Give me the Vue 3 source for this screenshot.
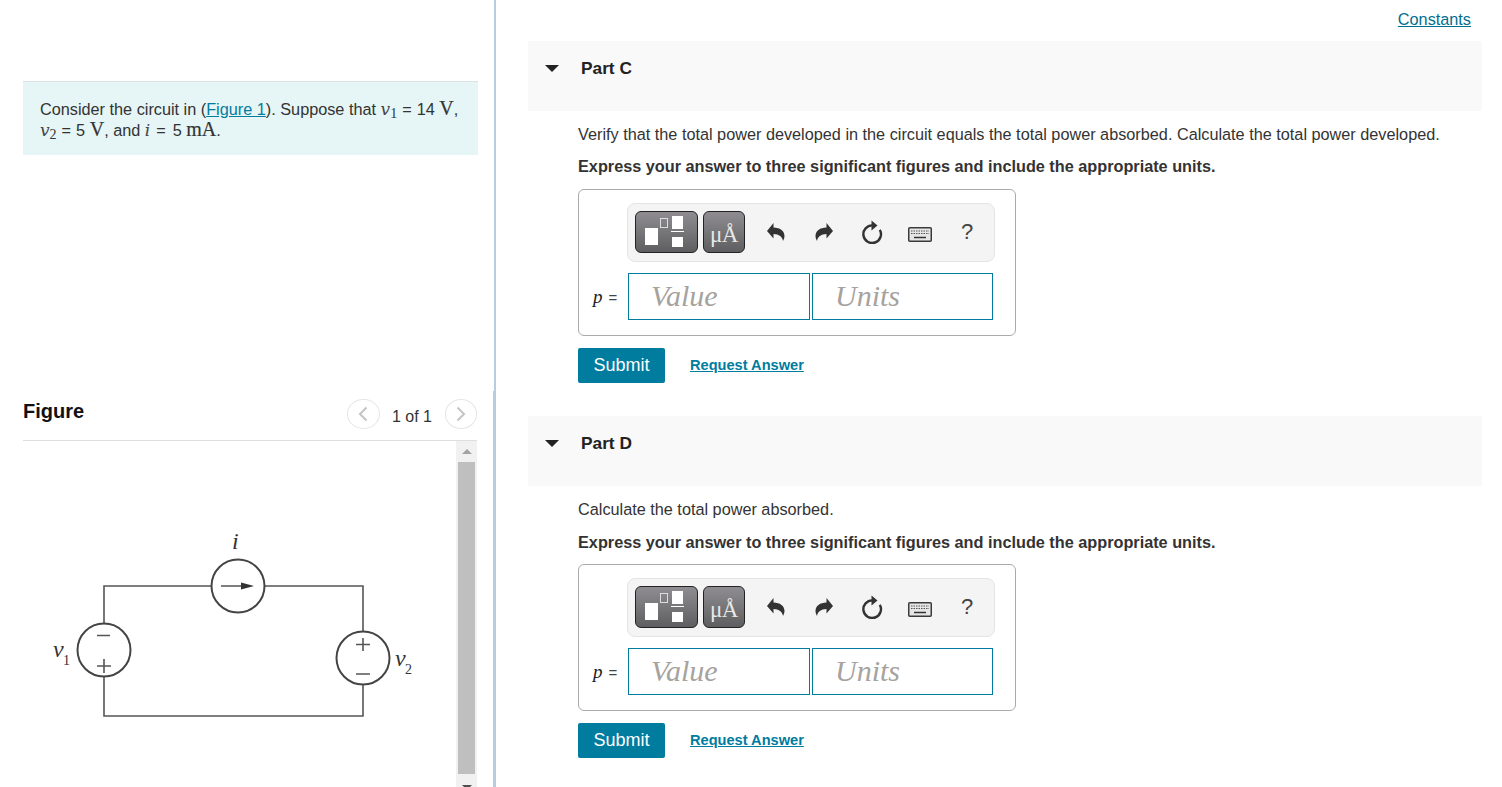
<template>
  <div class="page">
    <aside class="left">
      <div class="statement">
        Consider the circuit in (<a href="#" class="fig-link">Figure 1</a>). Suppose that
        <i class="mv">v</i><span class="ms">1</span><span class="eq">=</span>14 <span class="mu">V</span>,<br />
        <i class="mv">v</i><span class="ms">2</span><span class="eq">=</span>5 <span class="mu">V</span>, and
        <i class="mi">i</i><span class="eq eq-wide">=</span>5 <span class="mu">mA</span>.
      </div>

      <div class="fig-head">
        <span class="fig-title">Figure</span>
        <div class="fig-nav">
          <span class="round-btn">
            <svg width="10" height="16" viewBox="0 0 10 16"><path d="M8.500 1.500 2 8l6.500 6.500" /></svg>
          </span>
          <span class="fig-count">1 of 1</span>
          <span class="round-btn">
            <svg width="10" height="16" viewBox="0 0 10 16"><path d="M1.500 1.500 8 8l-6.500 6.500" /></svg>
          </span>
        </div>
      </div>

      <div class="fig-body">
        <svg class="circuit" width="433" height="346" viewBox="23 441 433 346">
          <g fill="none" stroke="#555" stroke-width="1.600">
            <path d="M211 586H104V623M265 586H363V631M104 677V716H363V685" />
          </g>
          <g fill="#fff" stroke="#444" stroke-width="2">
            <circle cx="238" cy="586" r="26.500" />
            <circle cx="104" cy="650" r="26.500" />
            <circle cx="363" cy="658" r="26.500" />
          </g>
          <path d="M221 586H245" stroke="#555" stroke-width="1.500" />
          <path d="M241 582.500 254 586l-13 3.500z" fill="#333" />
          <path d="M97 635.500H110M97 666H111M104 659V673" stroke="#555" stroke-width="1.600" fill="none" />
          <path d="M356 644.500H370M363 638V651M356 674H370" stroke="#555" stroke-width="1.600" fill="none" />
          <text x="232" y="549" class="cv">i</text>
          <text x="53" y="657" class="cv">v</text>
          <text x="63" y="665" class="cs">1</text>
          <text x="395" y="666" class="cv">v</text>
          <text x="405" y="674" class="cs">2</text>
        </svg>
        <div class="scrollbar">
          <span class="arrow-up"></span>
          <span class="thumb"></span>
          <span class="arrow-down"></span>
        </div>
      </div>
    </aside>

    <main class="right">
      <div class="top-link"><a href="#">Constants</a></div>

      <section v-for="part in parts" :key="part.name" class="part">
        <header class="part-head">
          <span class="caret"></span>
          <span class="part-name">{{ part.name }}</span>
        </header>
        <p class="prompt">{{ part.prompt }}</p>
        <p class="instr">Express your answer to three significant figures and include the appropriate units.</p>

        <div class="answer">
          <div class="toolbar">
            <button class="tool tool-wide">
              <svg width="61" height="40" viewBox="0 0 61 40">
                <rect x="9" y="16" width="13" height="17" fill="#fff" />
                <rect x="24.500" y="6.500" width="7" height="9" fill="none" stroke="#ddd" />
                <rect x="36" y="4" width="11" height="13" fill="#fff" />
                <rect x="35" y="19" width="13" height="1" fill="#fff" />
                <rect x="36" y="25" width="11" height="10" fill="#fff" />
              </svg>
            </button>
            <button class="tool tool-unit">μÅ</button>
            <span class="slot">
              <svg width="18" height="18" viewBox="0 0 18 18">
                <path d="M0 8 6.500 0V4.500C13 4.500 17.500 8 17.500 13 17.500 15 16.500 17 16 18 15.500 14 12 11 6.500 11V15.500z" />
              </svg>
            </span>
            <span class="slot">
              <svg width="18" height="18" viewBox="0 0 18 18">
                <path transform="translate(18 0) scale(-1 1)" d="M0 8 6.500 0V4.500C13 4.500 17.500 8 17.500 13 17.500 15 16.500 17 16 18 15.500 14 12 11 6.500 11V15.500z" />
              </svg>
            </span>
            <span class="slot">
              <svg width="22" height="24" viewBox="0 0 22 24">
                <path d="M11.500 5.400A8.800 8.800 0 1 0 18.800 9.800" fill="none" stroke="#333" stroke-width="2.400" />
                <path d="M10.500 0.500 16.500 5.400 10.500 10.500z" />
              </svg>
            </span>
            <span class="slot">
              <svg class="kbd" width="24" height="15" viewBox="0 0 24 15">
                <rect x="0.750" y="0.750" width="22.500" height="13.500" rx="1" fill="#e6e6e6" stroke="#3a3a3a" stroke-width="1.500" />
                <path d="M3 4H21M3 6.500H21" stroke="#555" stroke-dasharray="1.500 1" fill="none" />
                <path d="M6 10.500H18" stroke="#333" fill="none" stroke-width="1.500" />
              </svg>
            </span>
            <span class="slot help">?</span>
          </div>
          <div class="entry">
            <span class="entry-label"><i class="pv">p</i>=</span>
            <input class="field field-value" placeholder="Value" />
            <input class="field field-units" placeholder="Units" />
          </div>
        </div>

        <div class="actions">
          <button class="submit">Submit</button>
          <a href="#" class="request">Request Answer</a>
        </div>
      </section>
    </main>
  </div>
</template>

<script setup>
const parts = [
  {
    name: 'Part C',
    prompt: 'Verify that the total power developed in the circuit equals the total power absorbed. Calculate the total power developed.'
  },
  {
    name: 'Part D',
    prompt: 'Calculate the total power absorbed.'
  }
]
</script>

<style scoped>
.page {
  display: flex;
  height: 787px;
  overflow: hidden;
  font-family: "Liberation Sans", Arial, sans-serif;
  font-size: 16.250px;
  line-height: 21px;
  color: #333;
}

.left {
  width: 494px;
  box-sizing: border-box;
  flex: none;
  padding: 81px 16px 0 23px;
  display: flex;
  flex-direction: column;
  position: relative;
}

/* divider is a pixel wider from the figure panel down */
.left::after {
  content: "";
  position: absolute;
  right: 0;
  top: 391px;
  bottom: 0;
  width: 1px;
  background: #b9cde0;
}

.statement {
  height: 74px;
  box-sizing: border-box;
  padding: 17px 0 0 17px;
  background: #e6f5f6;
  border-top: 1px solid #dde3e5;
  white-space: nowrap;
}

.fig-link {
  color: #007c9f;
}

.mv {
  font-family: "DejaVu Serif", serif;
  font-size: 17px;
  line-height: 0;
  color: #444;
}

.mi {
  font-family: "DejaVu Serif", serif;
  font-size: 17px;
  line-height: 0;
  color: #444;
}

.ms {
  font-family: "Liberation Serif", serif;
  font-size: 14px;
  line-height: 0;
  vertical-align: -3px;
}

.eq {
  margin: 0 5px 0 5px;
}

.eq-wide {
  margin: 0 7px 0 6px;
}

.mu {
  font-family: "Liberation Serif", serif;
  font-size: 20px;
  line-height: 0;
  -webkit-text-stroke: 0.2px #333;
}

.fig-head {
  margin-top: 244px;
  margin-right: 1px;
  height: 41px;
  display: flex;
  justify-content: space-between;
  border-bottom: 1px solid #dcdfe0;
}

.fig-title {
  font-size: 20px;
  font-weight: bold;
  color: #111;
  line-height: 24px;
}

.fig-nav {
  display: flex;
  align-items: flex-start;
}

.round-btn {
  width: 32.500px;
  height: 30px;
  box-sizing: border-box;
  border: 1px solid #e6e6e6;
  border-radius: 50%;
  display: flex;
  align-items: center;
  justify-content: center;
}

.round-btn svg {
  fill: none;
  stroke: #c4c4c4;
  stroke-width: 2;
}

.fig-count {
  width: 65px;
  text-align: center;
  line-height: 36px;
  font-size: 16px;
}

.fig-body {
  flex: 1;
  display: flex;
  min-height: 0;
  justify-content: space-between;
}

.circuit {
  flex: none;
}

.cv {
  font-family: "Liberation Serif", serif;
  font-style: italic;
  font-size: 24px;
  fill: #333;
}

.cs {
  font-family: "Liberation Serif", serif;
  font-size: 14px;
  fill: #333;
}

.scrollbar {
  width: 21px;
  margin-right: 1px;
  background: #f1f1f1;
  display: flex;
  flex-direction: column;
  align-items: center;
  padding-top: 8px;
  box-sizing: border-box;
}

.arrow-up {
  width: 0;
  height: 0;
  border: 5px solid transparent;
  border-top: 0;
  border-bottom: 5px solid #a3a3a3;
}

.thumb {
  width: 17px;
  height: 312px;
  margin: 8px 0 11px;
  background: #bfbfbf;
  flex: none;
}

.arrow-down {
  width: 0;
  height: 0;
  border: 5px solid transparent;
  border-bottom: 0;
  border-top: 5px solid #505050;
  flex: none;
}

.right {
  flex: 1;
  border-left: 2px solid #b9cde0;
  padding: 9px 20px 0 32px;
  min-width: 0;
}

.top-link {
  height: 32px;
  padding-right: 11px;
  text-align: right;
}

.top-link a {
  color: #006f8f;
}

.part {
  margin-bottom: 33px;
}

.part-head {
  height: 70px;
  background: #f9f9f9;
  display: flex;
  align-items: flex-start;
  padding: 16px 0 0 17px;
  box-sizing: border-box;
}

.caret {
  width: 0;
  height: 0;
  margin-top: 8px;
  border-left: 7px solid transparent;
  border-right: 7px solid transparent;
  border-top: 7px solid #222;
}

.part-name {
  margin-left: 22px;
  font-size: 17.300px;
  line-height: 22px;
  font-weight: bold;
  color: #222;
}

.prompt {
  margin: 13px 0 11px 50px;
}

.instr {
  margin: 0 0 12px 50px;
  font-weight: bold;
}

.part + .part .prompt {
  margin-bottom: 12px;
}

.part + .part .instr {
  margin-bottom: 11px;
}

.answer {
  margin-left: 50px;
  width: 438px;
  height: 147px;
  box-sizing: border-box;
  border: 1px solid #aaa;
  border-radius: 6px;
  padding: 13px 0 0 48px;
}

.toolbar {
  width: 368px;
  height: 59px;
  box-sizing: border-box;
  background: #f4f4f4;
  border: 1px solid #e4e4e4;
  border-radius: 8px;
  padding: 7px 0 0 7px;
  display: flex;
  align-items: flex-start;
}

.tool {
  height: 42px;
  box-sizing: border-box;
  padding: 0;
  border: 1px solid #222;
  border-radius: 6px;
  background: linear-gradient(#8f8d91, #5e5e60);
  display: flex;
  align-items: center;
  justify-content: center;
}

.tool-wide {
  width: 63px;
}

.tool-unit {
  width: 42px;
  margin-left: 5px;
  padding-top: 5px;
  color: #e8e8e8;
  font-family: "Liberation Serif", serif;
  font-size: 23px;
  letter-spacing: -0.500px;
}

.slot {
  width: 48px;
  height: 42px;
  display: flex;
  align-items: center;
  justify-content: center;
}

.tool-unit + .slot {
  margin-left: 7px;
}

.slot svg {
  fill: #333;
}

.kbd {
  margin-top: 5px;
}

.help {
  font-size: 22px;
  color: #444;
  padding: 0 2px 2px 0;
  box-sizing: border-box;
}

.entry {
  display: flex;
  align-items: center;
  margin-top: 11px;
  margin-left: -48px;
}

.entry-label {
  width: 49px;
  box-sizing: border-box;
  padding-left: 14px;
  white-space: nowrap;
  font-size: 15px;
  color: #444;
}

.pv {
  font-family: "Liberation Serif", serif;
  font-size: 19px;
  margin-right: 6px;
  color: #222;
}

.field {
  height: 47px;
  box-sizing: border-box;
  border: 1px solid #007c9f;
  border-radius: 0;
  outline: none;
  padding: 0 0 2px 22px;
  font-family: "Liberation Serif", serif;
  font-style: italic;
  font-size: 30px;
  background: #fff;
}

.field::placeholder {
  color: #a6a29e;
  opacity: 1;
}

.field-value {
  width: 182px;
}

.field-units {
  width: 181px;
  margin-left: 2px;
}

.actions {
  display: flex;
  align-items: center;
  margin: 12px 0 0 50px;
}

.submit {
  width: 87px;
  height: 35px;
  border: 0;
  border-radius: 2px;
  background: #007c9f;
  color: #fff;
  font-family: "Liberation Sans", Arial, sans-serif;
  font-size: 18px;
  padding: 0;
}

.request {
  margin-left: 25px;
  color: #007c9f;
  font-size: 14.600px;
  font-weight: bold;
}
</style>

<style>
html,
body {
  margin: 0;
  background: #fff;
  overflow: hidden;
}
</style>
